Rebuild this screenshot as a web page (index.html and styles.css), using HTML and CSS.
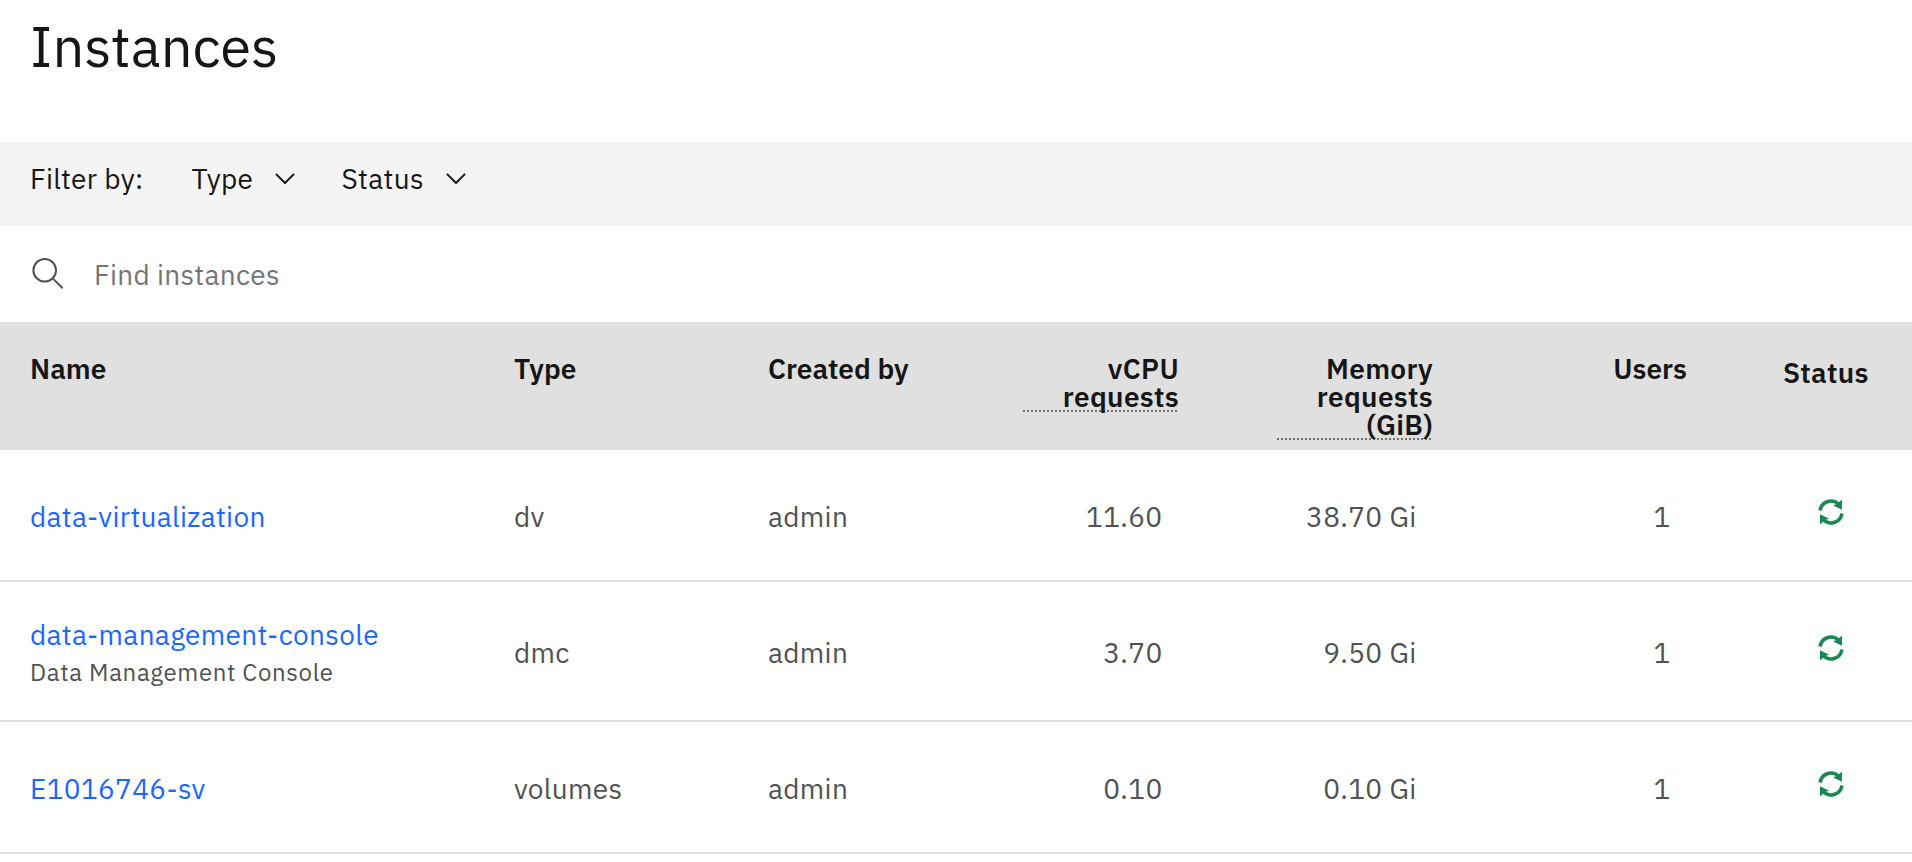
FILE: index.html
```
<!DOCTYPE html>
<html lang="en">
<head>
<meta charset="utf-8">
<title>Instances</title>
<link rel="stylesheet" href="styles.css">
</head>
<body>
<svg width="0" height="0" class="defs">
  <symbol id="running" viewBox="0 0 32 32">
    <g id="half">
      <path d="M5.1 14.6A11 11 0 0 1 23.4 8" fill="none" stroke="#198a4f" stroke-width="3.6"/>
      <path d="M27 3.6V13.8L18.2 9.4L22.5 7.4Z" fill="#198a4f"/>
    </g>
    <use href="#half" transform="rotate(180 16 16)"/>
  </symbol>
</svg>
<header class="page-head"><h1 class="title">Instances</h1></header>
<div class="filters">
  <span class="filter-label">Filter by:</span>
  <button class="filter filter-type"><span>Type</span><svg width="20" height="11" viewBox="0 0 20 11"><path d="M.9 .9L10 10L19.1 .9"/></svg></button>
  <button class="filter filter-status"><span>Status</span><svg width="20" height="11" viewBox="0 0 20 11"><path d="M.9 .9L10 10L19.1 .9"/></svg></button>
</div>
<div class="search">
  <svg width="34" height="34" viewBox="0 0 34 34"><circle cx="13.7" cy="13.3" r="11.3"/><path d="M21.8 21.4L31.6 31.2"/></svg>
  <span>Find instances</span>
</div>
<main class="table">
  <div class="row head">
    <div>Name</div>
    <div>Type</div>
    <div>Created by</div>
    <div class="num"><span class="hint">vCPU requests</span></div>
    <div class="num"><span class="hint">Memory requests (GiB)</span></div>
    <div class="num">Users</div>
    <div class="head-status">Status</div>
  </div>
  <div class="row item">
    <div><a class="link">data-virtualization</a></div>
    <div>dv</div>
    <div>admin</div>
    <div class="num">11.60</div>
    <div class="num">38.70 Gi</div>
    <div class="num">1</div>
    <div class="state"><svg width="32" height="32"><use href="#running"/></svg></div>
  </div>
  <div class="row item tall">
    <div class="stack"><a class="link">data-management-console</a><span class="sub">Data Management Console</span></div>
    <div>dmc</div>
    <div>admin</div>
    <div class="num">3.70</div>
    <div class="num">9.50 Gi</div>
    <div class="num">1</div>
    <div class="state"><svg width="32" height="32"><use href="#running"/></svg></div>
  </div>
  <div class="row item">
    <div><a class="link">E1016746-sv</a></div>
    <div>volumes</div>
    <div>admin</div>
    <div class="num">0.10</div>
    <div class="num">0.10 Gi</div>
    <div class="num">1</div>
    <div class="state"><svg width="32" height="32"><use href="#running"/></svg></div>
  </div>
</main>
</body>
</html>
```
FILE: styles.css
```
* { box-sizing: border-box; }
body {
  margin: 0;
  background: #fff;
  color: #161616;
  font: 400 28px/36px "IBM Plex Sans", "Noto Sans", sans-serif;
  letter-spacing: .32px;
  overflow: hidden;
}
.defs { display: block; }
.page-head { height: 142px; padding: 10px 0 0 30px; }
.title { margin: 0; font-size: 56px; line-height: 72px; font-weight: 400; letter-spacing: 0; }

.filters { display: flex; height: 84px; padding: 19px 0 0 30px; background: #f4f4f4; }
.filter-label { width: 161.5px; }
.filter {
  display: flex; align-items: center; justify-content: space-between;
  height: 36px; margin: 0; padding: 0; border: 0; background: none;
  color: inherit; font: inherit; letter-spacing: inherit;
}
.filter svg { margin-bottom: 2px; fill: none; stroke: #161616; stroke-width: 2; }
.filter-type { width: 103.5px; margin-right: 46.5px; }
.filter-status { width: 124.5px; }

.search { display: flex; align-items: center; gap: 29px; height: 96px; padding-left: 31px; color: #757575; }
.search svg { fill: none; stroke: #525252; stroke-width: 2; }
.search span { padding-top: 2px; }

.row { display: grid; grid-template-columns: 484px repeat(5, 254px) 1fr; padding-left: 30px; }
.num { text-align: right; }
.head { height: 128px; padding-top: 33px; background: #e0e0e0; font-weight: 600; line-height: 28px; letter-spacing: 0; }
.head .num { padding-right: 97px; }
.hint {
  display: block; width: 156px; margin-left: auto; padding-bottom: 1px; letter-spacing: .32px;
  background: repeating-linear-gradient(90deg, #6f6f6f 0 2px, transparent 2px 4px) left bottom / 100% 2px no-repeat;
}
.head-status { margin-left: -1px; padding-top: 4px; letter-spacing: .32px; }

.item { height: 132px; padding-top: 2px; align-items: center; color: #525252; box-shadow: inset 0 -2px #e0e0e0; }
.tall { height: 140px; }
.item .num { padding-right: 113.5px; }
.link { color: #1a67ff; }
.stack { display: flex; flex-direction: column; }
.stack .link { line-height: 38px; }
.sub { font-size: 24px; line-height: 37px; letter-spacing: .64px; }
.state { display: flex; height: 32px; padding-left: 31px; margin-bottom: 10px; }
```
